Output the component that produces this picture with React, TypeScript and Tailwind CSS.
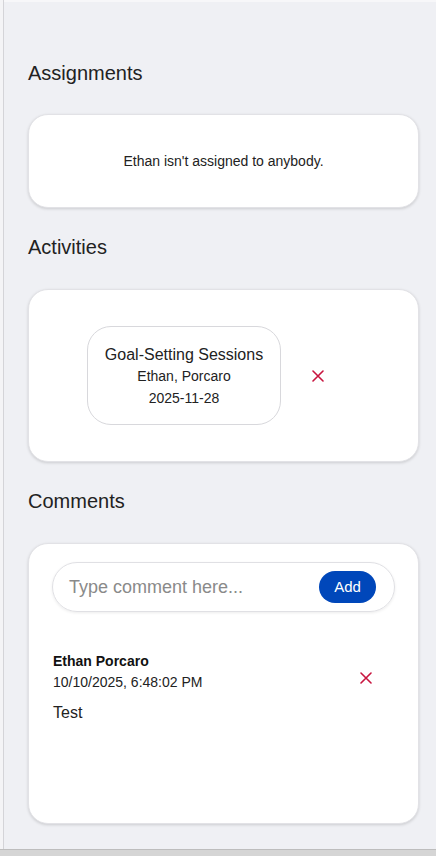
import React from "react";

function XIcon({ className = "" }: { className?: string }) {
  return (
    <svg width="12" height="12" viewBox="0 0 12 12" className={className}>
      <path d="M1 1 L11 11 M11 1 L1 11" stroke="#c8153f" strokeWidth="1.6" strokeLinecap="round" fill="none" />
    </svg>
  );
}

export default function App() {
  return (
    <div
      className="w-[436px] h-[856px] flex flex-col bg-[#eff0f4] text-[#222]"
      style={{ fontFamily: '"Liberation Sans", Arial, sans-serif' }}
    >
      <div className="flex flex-1 min-h-0">
        <div className="w-[4px] bg-[#f4f4f6] border-r border-[#d4d4d8]" />
        <div className="flex-1 flex flex-col">
          <div className="h-[2px] bg-[#f7f7f9]" />
          <div className="pl-[24px] pr-[17px] pt-[59px] flex flex-col">
            <h2 className="text-[20px] leading-[24px] text-[#222]">Assignments</h2>
            <div className="mt-[29px] h-[94px] bg-white rounded-[20px] border border-[#e2e2e6] shadow-[0_1px_3px_rgba(0,0,0,0.15)] flex items-center justify-center">
              <span className="text-[14px] leading-[16px] text-[#222]">Ethan isn't assigned to anybody.</span>
            </div>

            <h2 className="mt-[27px] text-[20px] leading-[24px] text-[#222]">Activities</h2>
            <div className="mt-[30px] bg-white rounded-[20px] border border-[#e2e2e6] shadow-[0_1px_3px_rgba(0,0,0,0.15)] pt-[36px] pb-[36px] pl-[58px] flex items-center">
              <div className="w-[194px] h-[99px] rounded-[24px] border border-[#d8d8dc] bg-white flex flex-col items-center pt-[18px]">
                <div className="text-[16px] leading-[20px] text-[#222]">Goal-Setting Sessions</div>
                <div className="text-[14px] leading-[22px] text-[#222]">Ethan, Porcaro</div>
                <div className="text-[14px] leading-[22px] text-[#222]">2025-11-28</div>
              </div>
              <XIcon className="ml-[31px]" />
            </div>

            <h2 className="mt-[27px] text-[20px] leading-[24px] text-[#222]">Comments</h2>
            <div className="mt-[30px] h-[281px] bg-white rounded-[20px] border border-[#e2e2e6] shadow-[0_1px_3px_rgba(0,0,0,0.15)] pt-[18px] px-[23px] flex flex-col">
              <div className="h-[50px] rounded-full border border-[#e0e0e4] shadow-[0_1px_3px_rgba(0,0,0,0.08)] flex items-center pl-[16px] pr-[18px]">
                <span className="flex-1 text-[18px] leading-[22px] text-[#8a8a8a]">Type comment here...</span>
                <button className="w-[57px] h-[32px] rounded-full bg-[#0047ba] text-white text-[15px] leading-[18px]">Add</button>
              </div>
              <div className="mt-[39px] pl-[1px] flex items-start">
                <div className="flex-1 flex flex-col">
                  <div className="text-[14px] leading-[20px] font-bold text-[#111]">Ethan Porcaro</div>
                  <div className="mt-[1px] text-[14px] leading-[20px] text-[#222]">10/10/2025, 6:48:02 PM</div>
                  <div className="mt-[11px] text-[16px] leading-[20px] text-[#222]">Test</div>
                </div>
                <XIcon className="mt-[21px] mr-[23px]" />
              </div>
            </div>
          </div>
        </div>
      </div>
      <div className="h-[7px] bg-[#d5d5d5] border-t border-[#bdbdbd]" />
    </div>
  );
}
